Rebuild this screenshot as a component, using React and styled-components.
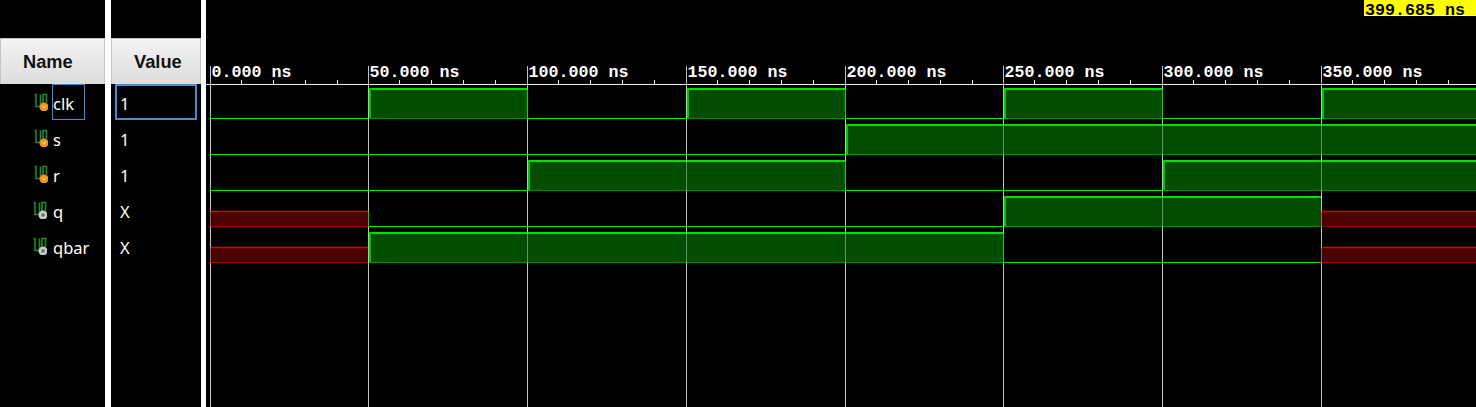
import styled, { createGlobalStyle } from 'styled-components'

const GlobalStyle = createGlobalStyle`
  html, body {
    margin: 0;
    padding: 0;
    background: #000;
    overflow: hidden;
  }
`

const signals = [
  { name: 'clk', value: '1', kind: 'input', low: 118, parts: [[210, 368, 0], [368, 527, 1], [527, 686, 0], [686, 845, 1], [845, 1003, 0], [1003, 1162, 1], [1162, 1321, 0], [1321, 1476, 1]] },
  { name: 's', value: '1', kind: 'input', low: 154, parts: [[210, 845, 0], [845, 1476, 1]] },
  { name: 'r', value: '1', kind: 'input', low: 190, parts: [[210, 527, 0], [527, 845, 1], [845, 1162, 0], [1162, 1476, 1]] },
  { name: 'q', value: 'X', kind: 'output', low: 226, parts: [[210, 368, 'x'], [368, 1003, 0], [1003, 1321, 1], [1321, 1476, 'x']] },
  { name: 'qbar', value: 'X', kind: 'output', low: 262, parts: [[210, 368, 'x'], [368, 1003, 1], [1003, 1321, 0], [1321, 1476, 'x']] },
]

const grid = [210, 368, 527, 686, 845, 1003, 1162, 1321]
const labels = ['0.000 ns', '50.000 ns', '100.000 ns', '150.000 ns', '200.000 ns', '250.000 ns', '300.000 ns', '350.000 ns']

const SignalIcon = ({ kind }) => (
  <IconSvg viewBox="0 0 14 18" width="14" height="18" $output={kind === 'output'}>
    <path d="M0.5 1.5h1.5v12h4.5V1.5M9 10V1.5h3.5V10" fill="none" stroke="#1f8a2e" strokeWidth="1.6" />
    {kind === 'input' ? (
      <>
        <circle cx="10" cy="14" r="4.5" fill="#ee8f1f" />
        <path d="M8.6 12.6l1.4 3 1.4-3" fill="none" stroke="#ffe6b8" strokeWidth="0.9" />
      </>
    ) : (
      <>
        <circle cx="10" cy="14" r="4.5" fill="#c8c8c8" />
        <circle cx="10" cy="14" r="1.7" fill="#6a6a6a" />
      </>
    )}
  </IconSvg>
)

const Wave = ({ signal }) => {
  const { low, parts } = signal
  const high = low - 29
  const red = low - 15
  return (
    <g>
      {parts.map(([from, to, v], i) => {
        if (v === 'x') {
          return (
            <g key={i}>
              <rect x={from} y={red} width={to - from} height={15} fill="#4d0000" />
              <line x1={from} x2={to} y1={red + 0.5} y2={red + 0.5} stroke="#e00000" strokeWidth="1.6" />
              <line x1={from} x2={to} y1={low + 0.5} y2={low + 0.5} stroke="#8c0000" />
            </g>
          )
        }
        if (v === 1) {
          return (
            <g key={i}>
              <rect x={from + 1} y={high} width={to - from - 1} height={29} fill="#004d00" />
              <line x1={from + 1} x2={to} y1={high} y2={high} stroke="#00e000" strokeWidth="2" />
              <line x1={from + 1} x2={to} y1={low + 0.5} y2={low + 0.5} stroke="#008c00" />
            </g>
          )
        }
        return <line key={i} x1={from} x2={to} y1={low + 0.5} y2={low + 0.5} stroke="#00ee00" />
      })}
    </g>
  )
}

// edges go over the grid lines, the rest of the wave lies under them
const Edges = ({ signal }) => {
  const { low, parts } = signal
  const high = low - 29
  const red = low - 15
  return (
    <g>
      {parts.map(([from, , v], i) => {
        if (i === 0) return null
        const prev = parts[i - 1][2]
        if (v === 1) {
          return <line key={i} x1={from + 2} x2={from + 2} y1={high - 1} y2={low} stroke="#00c800" strokeWidth="2" />
        }
        if (v === 0) {
          return <line key={i} x1={from + 0.5} x2={from + 0.5} y1={prev === 1 ? high : red} y2={low + 1} stroke="#00e000" />
        }
        return null
      })}
    </g>
  )
}

const ticks = []
grid.forEach((x) => {
  for (let i = 1; i < 5; i++) ticks.push(x + i * 31.8)
})

export default function App() {
  return (
    <>
      <GlobalStyle />
      <Page>
        <Column $width={105}>
          <HeaderButton>Name</HeaderButton>
          {signals.map((s, i) => (
            <NameRow key={s.name}>
              <SignalIcon kind={s.kind} />
              <NameLabel $selected={i === 0}>{s.name}</NameLabel>
            </NameRow>
          ))}
        </Column>
        <Divider $width={6} />
        <Column $width={90}>
          <HeaderButton>Value</HeaderButton>
          {signals.map((s, i) => (
            <ValueRow key={s.name} $selected={i === 0}>{s.value}</ValueRow>
          ))}
        </Column>
        <Divider $width={5} />
        <WavePane>
          <CursorBar>
            <CursorTime>399.685 ns</CursorTime>
          </CursorBar>
          <WaveSvg viewBox="206 0 1270 407" width="1270" height="407">
            {grid.map((x) => (
              <line key={x} x1={x + 0.5} x2={x + 0.5} y1={66} y2={407} stroke="#c0c0c0" />
            ))}
            <line x1={206} x2={1476} y1={84.5} y2={84.5} stroke="#f0f0f0" />
            {ticks.map((x) => (
              <line key={x} x1={Math.floor(x) + 0.5} x2={Math.floor(x) + 0.5} y1={80} y2={84} stroke="#f0f0f0" />
            ))}
            {grid.map((x, i) => (
              <RulerText key={x} x={x + 1.5} y={77}>{labels[i]}</RulerText>
            ))}
            {signals.map((s) => (
              <Wave key={s.name} signal={s} />
            ))}
            {grid.map((x) => (
              <line key={x} x1={x + 0.5} x2={x + 0.5} y1={85} y2={265} stroke="#c0c0c0" strokeOpacity="0.55" />
            ))}
            {signals.map((s) => (
              <Edges key={s.name} signal={s} />
            ))}
          </WaveSvg>
        </WavePane>
      </Page>
    </>
  )
}

const Page = styled.div`
  display: flex;
  width: 1476px;
  height: 407px;
  background: #000;
  overflow: hidden;
`

const Column = styled.div`
  width: ${(p) => p.$width}px;
  flex: none;
  padding-top: 38px;
  box-sizing: border-box;
`

const Divider = styled.div`
  width: ${(p) => p.$width}px;
  flex: none;
  background: #fff;
`

const HeaderButton = styled.div`
  height: 46px;
  box-sizing: border-box;
  display: flex;
  align-items: center;
  padding-left: 22px;
  border: 1px solid #c4c4c4;
  border-bottom: none;
  background: linear-gradient(#f4f4f4, #dcdcdc);
  color: #111;
  font: bold 18.3px "Liberation Sans", Arial, sans-serif;
`

const NameRow = styled.div`
  height: 36px;
  display: flex;
  align-items: center;
  padding-left: 34px;
  color: #fff;
  font: 16.5px "Noto Sans", "Open Sans", sans-serif;
`

const IconSvg = styled.svg`
  flex: none;
  margin-top: -1px;
  margin-left: ${(p) => (p.$output ? -1 : 0)}px;
  margin-right: ${(p) => (p.$output ? 1 : 0)}px;
`

const NameLabel = styled.div`
  height: 36px;
  box-sizing: border-box;
  display: flex;
  align-items: center;
  margin-left: 4px;
  padding: 2px 10px 0 0;
  border: 1px solid ${(p) => (p.$selected ? '#3f8fd0' : 'transparent')};
`

const ValueRow = styled.div`
  height: 36px;
  box-sizing: border-box;
  margin: 0 4px;
  padding: 2px 0 0 3px;
  display: flex;
  align-items: center;
  color: #fff;
  font: 16.5px "Noto Sans", "Open Sans", sans-serif;
  border: 2px solid ${(p) => (p.$selected ? '#3f8fd0' : 'transparent')};
`

const WavePane = styled.div`
  position: relative;
  flex: 1;
  min-width: 0;
`

const CursorBar = styled.div`
  position: absolute;
  top: 0;
  right: 0;
`

const CursorTime = styled.div`
  width: 112px;
  height: 16px;
  box-sizing: border-box;
  background: #ffff00;
  border-bottom: 1px solid #fff;
  padding-left: 1px;
  color: #000;
  font: bold 16.67px/21px "Liberation Mono", monospace;
  white-space: nowrap;
`

const WaveSvg = styled.svg`
  display: block;
`

const RulerText = styled.text`
  fill: #fff;
  font: bold 16.67px "Liberation Mono", monospace;
  white-space: pre;
`
